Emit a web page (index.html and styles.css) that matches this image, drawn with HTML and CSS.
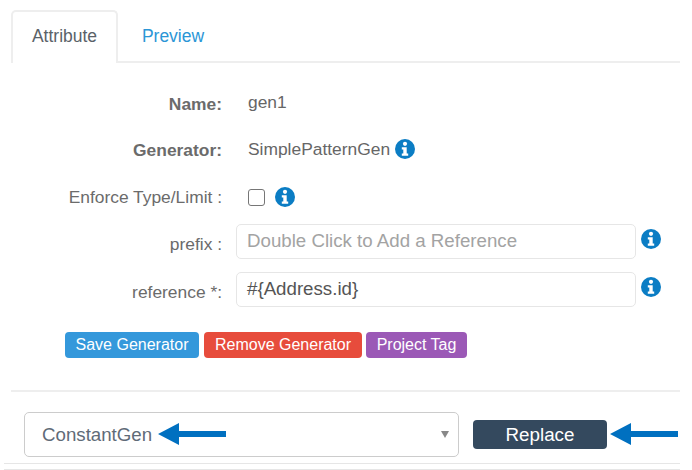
FILE: index.html
```html
<!DOCTYPE html>
<html lang="en">
<head>
<meta charset="utf-8">
<title>Generator</title>
<link rel="stylesheet" href="styles.css">
</head>
<body>
<svg width="0" height="0" class="defs">
  <symbol id="info" viewBox="0 0 20 20">
    <circle cx="10" cy="10" r="10" fill="#0b7dc4"/>
    <circle cx="10" cy="4.8" r="2.1" fill="#fff"/>
    <path d="M6.8 8.2h4.9v6.4h1.5v2.2H6.8v-2.2h1.5v-4.2H6.8z" fill="#fff"/>
  </symbol>
  <symbol id="arrow" viewBox="0 0 68 22">
    <path d="M0 11 21 0v8h47v6H21v8z" fill="#0070c0"/>
  </symbol>
</svg>
<main class="page">
  <nav class="tabs">
    <a class="tab tab-active">Attribute</a>
    <a class="tab tab-link">Preview</a>
  </nav>
  <form class="form">
    <div class="row row-name">
      <label class="label label-bold">Name:</label>
      <div class="value value-name">gen1</div>
    </div>
    <div class="row row-generator">
      <label class="label label-bold">Generator:</label>
      <div class="value">SimplePatternGen<svg class="icon icon-inline"><use href="#info"/></svg></div>
    </div>
    <div class="row row-enforce">
      <label class="label">Enforce Type/Limit :</label>
      <div class="value value-check"><span class="checkbox"></span><svg class="icon"><use href="#info"/></svg></div>
    </div>
    <div class="row row-field">
      <label class="label">prefix :</label>
      <div class="input input-placeholder">Double Click to Add a Reference</div>
      <svg class="icon"><use href="#info"/></svg>
    </div>
    <div class="row row-field row-reference">
      <label class="label">reference *:</label>
      <div class="input">#{Address.id}</div>
      <svg class="icon"><use href="#info"/></svg>
    </div>
    <div class="actions">
      <button type="button" class="btn btn-blue">Save Generator</button>
      <button type="button" class="btn btn-red">Remove Generator</button>
      <button type="button" class="btn btn-purple">Project Tag</button>
    </div>
  </form>
  <div class="replace">
    <div class="select">
      <span>ConstantGen</span>
      <span class="caret"></span>
      <svg class="arrow arrow-select"><use href="#arrow"/></svg>
    </div>
    <button type="button" class="btn-replace">Replace</button>
    <svg class="arrow arrow-replace"><use href="#arrow"/></svg>
  </div>
  <div class="foot"></div>
</main>
</body>
</html>
```
FILE: styles.css
```css
* { box-sizing: border-box; }
html, body { margin: 0; padding: 0; background: #fff; }
body { font-family: "Liberation Sans", Arial, sans-serif; font-size: 18px; color: #666; height: 470px; overflow: hidden; }
.defs { position: absolute; }
.page { width: 680px; padding: 10px 0 0 11px; }
.tabs { display: flex; height: 53px; border-bottom: 2px solid #eee; }
.tab { height: 53px; font-size: 17.5px; text-align: center; }
.tab-active { width: 107px; line-height: 49px; color: #5a6268; background: #fff; border: 2px solid #eee; border-bottom: 0; border-radius: 5px 5px 0 0; }
.tab-link { width: 110px; line-height: 52px; color: #2b96d6; }
.form { height: 329px; padding-top: 28px; border-bottom: 2px solid #eee; }
.row { display: flex; align-items: center; }
.label { width: 211px; text-align: right; font-size: 17.4px; color: #6b6b6b; flex: none; }
.label-bold { font-weight: 700; padding-top: 3px; }
.value { margin-left: 26px; font-size: 17.4px; color: #666; display: flex; align-items: center; }
.value-name { padding-bottom: 2px; }
.row-name { height: 24px; }
.row-generator { height: 24px; margin-top: 22px; }
.row-enforce { height: 24px; margin-top: 24px; }
.value-check { gap: 10px; }
.checkbox { width: 17px; height: 17px; border: 1.5px solid #767676; border-radius: 3px; background: #fff; }
.icon { width: 20px; height: 20px; flex: none; }
.icon-inline { margin-left: 5px; }
.row-field { margin-top: 15px; }
.row-field .icon { margin-bottom: 6px; }
.row-reference { margin-top: 13px; }
.input { width: 400px; height: 35px; margin: 0 5px 0 14px; padding: 0 10px; border: 1.5px solid #e6e6e6; border-radius: 5px; line-height: 32px; font-size: 18.7px; color: #555; }
.input-placeholder { color: #a3a3a3; }
.row-field .label { padding-top: 6px; }
.actions { display: flex; gap: 5px; margin: 25px 0 0 54px; }
.btn { height: 26px; padding: 0; border: 1px solid transparent; border-radius: 4px; color: #fff; font: 16px "Liberation Sans", Arial, sans-serif; }
.btn-blue { width: 134px; background: #3498db; }
.btn-red { width: 158px; background: #e74c3c; margin-right: -1px; }
.btn-purple { width: 101px; background: #9b59b6; }
.replace { display: flex; align-items: center; height: 72px; margin-left: -7px; position: relative; padding: 14px 0 0 20px; border-bottom: 1px solid #e6e6e6; }
.select { position: relative; width: 435px; height: 45px; padding: 0 17px; display: flex; align-items: center; justify-content: space-between; border: 1.5px solid #ccc; border-radius: 5px; font-size: 18.7px; color: #5f6b78; }
.caret { width: 0; height: 0; border: 4px solid transparent; border-top: 7px solid #888; border-bottom: 0; margin-right: -8px; }
.btn-replace { width: 134px; height: 29px; margin-left: 14px; padding: 0; border: 0; border-radius: 4px; background: #34495e; color: #fff; font: 18.8px "Liberation Sans", Arial, sans-serif; }
.arrow { width: 68px; height: 22px; position: absolute; }
.arrow-select { left: 133px; top: 10px; }
.arrow-replace { left: 606px; top: 31px; }
.foot { height: 1px; margin: 5px 0 0 -7px; background: #e6e6e6; }
```
